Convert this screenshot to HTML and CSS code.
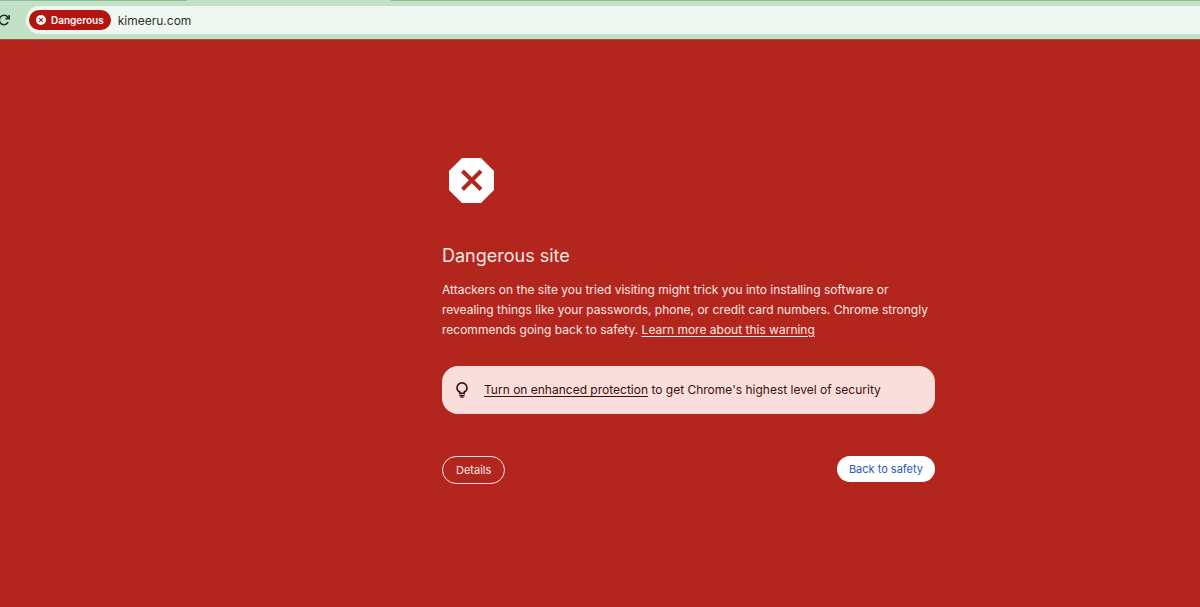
FILE: index.html
```html
<!DOCTYPE html>
<html lang="en">
<head>
  <meta charset="utf-8">
  <title>Dangerous site</title>
  <link rel="stylesheet" href="styles.css">
</head>
<body>
  <!-- Browser toolbar -->
  <header class="browser">
    <div class="tab-strip">
      <div class="active-tab"></div>
    </div>
    <div class="toolbar">
      <button class="reload" type="button" aria-label="Reload">
        <svg width="14" height="14" viewBox="0 0 14 14" fill="none" stroke="#263328" stroke-width="1.6">
          <path d="M11.2 9.2A4.7 4.7 0 1 1 10.6 3.9L12 5.4"/>
          <path d="M12.2 2v3.6H8.5"/>
        </svg>
      </button>
      <div class="address-bar">
        <button class="danger-chip" type="button">
          <svg width="10" height="10" viewBox="0 0 10 10">
            <circle cx="5" cy="5" r="5" fill="#fff"/>
            <path d="M3.2 3.2l3.6 3.6M6.8 3.2L3.2 6.8" stroke="#b3140f" stroke-width="1.2"/>
          </svg>
          Dangerous
        </button>
        <input class="url" type="text" value="kimeeru.com" aria-label="Address">
      </div>
    </div>
  </header>

  <!-- Warning page -->
  <main class="warning">
    <svg class="stop-icon" width="45" height="45" viewBox="0 0 45 45">
      <path d="M13 0h19l13 13v19L32 45H13L0 32V13z" fill="#fff"/>
      <path d="M13.500 13l18.500 18.500M32 13L13.500 31.500" stroke="#b3261e" stroke-width="4"/>
    </svg>
    <h1>Dangerous site</h1>
    <p class="message">Attackers on the site you tried visiting might trick you into installing software or revealing things like your passwords, phone, or credit card numbers. Chrome strongly recommends going back to safety. <a href="#">Learn more about this warning</a></p>

    <div class="protection">
      <svg width="12" height="16" viewBox="0 0 12 16" fill="none" stroke="#410e0b" stroke-width="1.6">
        <path d="M3.8 11.4V10C2 9.100 1 7.700 1 5.900a5 5 0 0 1 10 0c0 1.800-1 3.200-2.800 4.100v1.400z"/>
        <path d="M3.300 13.600h5.400M4.400 15.200h3.200" stroke-width="1.300"/>
      </svg>
      <p><a href="#">Turn on enhanced protection</a> to get Chrome's highest level of security</p>
    </div>

    <div class="actions">
      <button class="details" type="button">Details</button>
      <button class="safety" type="button">Back to safety</button>
    </div>
  </main>
</body>
</html>
```
FILE: styles.css
```css
body {
  margin: 0;
  min-height: 100vh;
  background-color: #b3261e;
  color: #fce8e4;
  font-family: Inter, "Liberation Sans", sans-serif;
}

button,
input {
  font-family: inherit;
  border: none;
  padding: 0;
}

a {
  color: inherit;
  text-underline-offset: 2px;
}

/* Browser toolbar */
.browser {
  background-color: #c3e2c5;
  border-bottom: 1px solid #8a5a43;
}

.tab-strip {
  height: 1px;
  background-color: #8fbd96;
}

.active-tab {
  width: 17%;
  height: 1px;
  margin-left: 187px;
  background-color: #c3e2c5;
}

.toolbar {
  display: flex;
  align-items: center;
  gap: 15px;
  padding: 5px 0;
}

.reload {
  display: flex;
  width: 14px;
  margin-left: -3px;
  background: none;
}

.address-bar {
  flex: 1;
  display: flex;
  align-items: center;
  gap: 7px;
  height: 28px;
  padding-left: 3px;
  border-radius: 14px 0 0 14px;
  background-color: #f0f7f0;
}

.danger-chip {
  display: flex;
  align-items: center;
  gap: 5px;
  height: 20px;
  padding: 0 7px;
  border-radius: 10px;
  background-color: #b3140f;
  color: #fff;
  font-size: 10px;
  font-weight: 600;
}

.url {
  flex: 1;
  background: none;
  color: #2b332c;
  font-size: 12px;
}

/* Warning page */
.warning {
  max-width: 493px;
  margin-left: calc(50% - 158px);
  padding-top: 118px;
}

.stop-icon {
  display: block;
  margin-left: 7px;
}

h1 {
  margin: 40px 0 11px;
  font-size: 18px;
  font-weight: 400;
  line-height: 26px;
}

.message {
  margin: 0;
  font-size: 12px;
  line-height: 20px;
}

.protection {
  display: flex;
  align-items: center;
  gap: 16px;
  margin-top: 26px;
  padding: 14px;
  border-radius: 16px;
  background-color: #f9dedc;
  color: #410e0b;
  font-size: 12px;
  line-height: 20px;
}

.protection p {
  margin: 0;
}

.actions {
  display: flex;
  justify-content: space-between;
  align-items: flex-start;
  margin-top: 42px;
}

.actions button {
  border-radius: 14px;
  font-size: 11px;
  font-weight: 400;
}

.details {
  height: 28px;
  padding: 0 13px;
  border: 1px solid #fce8e4;
  background: none;
  color: #fce8e4;
}

.safety {
  height: 26px;
  padding: 0 12px;
  background-color: #fff;
  color: #2459c0;
}
```
